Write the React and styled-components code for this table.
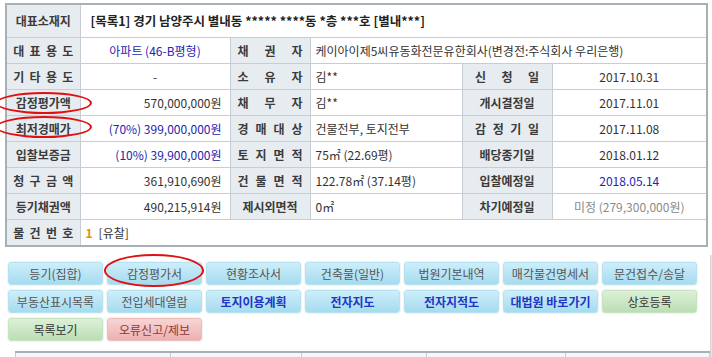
import React from "react";
import styled, { createGlobalStyle } from "styled-components";

const GlobalStyle = createGlobalStyle`
  html, body {
    margin: 0;
    padding: 0;
    overflow: hidden;
    background: #fff;
  }
  body {
    font-family: "Noto Sans CJK KR", "Noto Sans", sans-serif;
    font-size: 12px;
    color: #333;
  }
`;

const Page = styled.div`
  position: relative;
  width: 712px;
  height: 357px;
  padding: 3px 0 0 5px;
  box-sizing: border-box;
  overflow: hidden;
`;

const InfoTable = styled.table`
  width: 703px;
  table-layout: fixed;
  border-collapse: collapse;
  border: 2px solid #a7afb7;
`;

const Label = styled.th`
  height: 25px;
  padding: 0;
  background: #e7ecf1;
  border: 1px solid #c6cdd5;
  color: #3b3b3b;
  font-weight: bold;
  font-size: 12px;
  line-height: 14px;
  text-align: center;
  vertical-align: middle;
`;

const Spread = styled.span`
  display: flex;
  justify-content: space-between;
  width: ${(p) => p.$w}px;
  margin: 0 auto;
`;

const Value = styled.td`
  height: 25px;
  padding: 0 ${(p) => (p.$align === "right" ? "8px" : "5px")};
  border: 1px solid #c6cdd5;
  font-size: 12px;
  line-height: 14px;
  white-space: nowrap;
  overflow: hidden;
  text-align: ${(p) => p.$align || "left"};
  color: ${(p) =>
    p.$tone === "blue" ? "#2525b0" : p.$tone === "gray" ? "#8a8a8a" : "#333"};
`;

const Address = styled.span`
  font-weight: bold;
  font-size: 12.5px;
  color: #222;
  padding-left: 5px;
`;

const Num = styled.span`
  color: #e8900a;
  font-weight: bold;
  margin-right: 6px;
`;

const Lower = styled.div`
  display: flex;
  justify-content: space-between;
  margin-top: 8px;
  margin-left: -5px;
`;

const LowerMain = styled.div`
  padding: 7px 0 0 8px;
`;

const ButtonGrid = styled.div`
  display: grid;
  grid-template-columns: repeat(7, 95px);
  column-gap: 4px;
  row-gap: 5px;
`;

const tones = {
  blue: ["#cdeefa", "#a6dbef", "#b5e2f3", "#555", "normal"],
  link: ["#cdeefa", "#a6dbef", "#b5e2f3", "#2136c4", "bold"],
  green: ["#dcf0d8", "#bcdeb4", "#c6e4bf", "#333", "normal"],
  red: ["#f8d4d4", "#eeb0b0", "#efbcbc", "#8a3a3a", "normal"],
};

const Btn = styled.div`
  height: 23px;
  border-radius: 3px;
  border: 1px solid ${(p) => tones[p.$tone][2]};
  box-shadow: 0 0 0 1px #f2f4f5;
  background: linear-gradient(${(p) => tones[p.$tone][0]}, ${(p) => tones[p.$tone][1]});
  color: ${(p) => tones[p.$tone][3]};
  font-weight: ${(p) => tones[p.$tone][4]};
  font-size: 12px;
  display: flex;
  align-items: center;
  justify-content: center;
  box-sizing: border-box;
  white-space: nowrap;
`;

const SideStrip = styled.div`
  width: 4px;
  background: #e4e5e7;
  border-left: 1px solid #d2d4d7;
`;

const ListTable = styled.table`
  margin: 10px 0 0 7px;
  width: 695px;
  table-layout: fixed;
  border-collapse: collapse;
  border-top: 2px solid #a7afb7;
  border-left: 1px solid #c6cdd5;
  border-right: 1px solid #c6cdd5;
`;

const ListCell = styled.td`
  height: 24px;
  border-right: 1px solid #c6cdd5;
  background: #f4f6f8;
`;

const Ellipse = styled.div`
  position: absolute;
  left: ${(p) => p.$x}px;
  top: ${(p) => p.$y}px;
  width: ${(p) => p.$w}px;
  height: ${(p) => p.$h}px;
  border: 2px solid #e01010;
  border-radius: 50%;
  box-sizing: border-box;
  pointer-events: none;
`;

function L({ text, w = 60, ...rest }) {
  const chars = text.split("");
  return (
    <Label {...rest}>
      {chars.length < 5 ? (
        <Spread $w={w}>
          {chars.map((c, i) => (
            <span key={i}>{c}</span>
          ))}
        </Spread>
      ) : (
        text
      )}
    </Label>
  );
}

const buttons = [
  ["등기(집합)", "blue"],
  ["감정평가서", "blue"],
  ["현황조사서", "blue"],
  ["건축물(일반)", "blue"],
  ["법원기본내역", "blue"],
  ["매각물건명세서", "blue"],
  ["문건접수/송달", "blue"],
  ["부동산표시목록", "blue"],
  ["전입세대열람", "blue"],
  ["토지이용계획", "link"],
  ["전자지도", "link"],
  ["전자지적도", "link"],
  ["대법원 바로가기", "link"],
  ["상호등록", "green"],
  ["목록보기", "green"],
  ["오류신고/제보", "red"],
];

export default function App() {
  return (
    <Page>
      <GlobalStyle />
      <InfoTable>
        <colgroup>
          <col style={{ width: 74 }} />
          <col style={{ width: 150 }} />
          <col style={{ width: 80 }} />
          <col style={{ width: 152 }} />
          <col style={{ width: 90 }} />
          <col />
        </colgroup>
        <tbody>
          <tr>
            <L text="대표소재지" style={{ height: 32 }} />
            <Value colSpan={5}>
              <Address>[목록1] 경기 남양주시 별내동 ***** ****동 *층 ***호 [별내***]</Address>
            </Value>
          </tr>
          <tr>
            <L text="대표용도" />
            <Value $align="center" $tone="blue">아파트 (46-B평형)</Value>
            <L text="채권자" w={65} />
            <Value colSpan={3}>케이아이제5씨유동화전문유한회사(변경전:주식회사 우리은행)</Value>
          </tr>
          <tr>
            <L text="기타용도" />
            <Value $align="center">-</Value>
            <L text="소유자" w={65} />
            <Value>김**</Value>
            <L text="신청일" w={64} />
            <Value $align="center">2017.10.31</Value>
          </tr>
          <tr>
            <L text="감정평가액" />
            <Value $align="right">570,000,000원</Value>
            <L text="채무자" w={65} />
            <Value>김**</Value>
            <L text="개시결정일" />
            <Value $align="center">2017.11.01</Value>
          </tr>
          <tr>
            <L text="최저경매가" />
            <Value $align="right" $tone="blue">(70%) 399,000,000원</Value>
            <L text="경매대상" w={65} />
            <Value>건물전부, 토지전부</Value>
            <L text="감정기일" w={64} />
            <Value $align="center">2017.11.08</Value>
          </tr>
          <tr>
            <L text="입찰보증금" />
            <Value $align="right" $tone="blue">(10%) 39,900,000원</Value>
            <L text="토지면적" w={65} />
            <Value>75㎡ (22.69평)</Value>
            <L text="배당종기일" />
            <Value $align="center">2018.01.12</Value>
          </tr>
          <tr>
            <L text="청구금액" />
            <Value $align="right">361,910,690원</Value>
            <L text="건물면적" w={65} />
            <Value>122.78㎡ (37.14평)</Value>
            <L text="입찰예정일" />
            <Value $align="center" $tone="blue">2018.05.14</Value>
          </tr>
          <tr>
            <L text="등기채권액" />
            <Value $align="right">490,215,914원</Value>
            <L text="제시외면적" />
            <Value>0㎡</Value>
            <L text="차기예정일" />
            <Value $align="center" $tone="gray">미정 (279,300,000원)</Value>
          </tr>
          <tr>
            <L text="물건번호" />
            <Value colSpan={5}>
              <Num>1</Num>[유찰]
            </Value>
          </tr>
        </tbody>
      </InfoTable>

      <Lower>
        <LowerMain>
          <ButtonGrid>
            {buttons.map(([label, tone]) => (
              <Btn key={label} $tone={tone}>
                {label}
              </Btn>
            ))}
          </ButtonGrid>
          <ListTable>
            <colgroup>
              <col style={{ width: 155 }} />
              <col style={{ width: 131 }} />
              <col style={{ width: 125 }} />
              <col style={{ width: 139 }} />
              <col />
            </colgroup>
            <tbody>
              <tr>
                <ListCell />
                <ListCell />
                <ListCell />
                <ListCell />
                <ListCell />
              </tr>
            </tbody>
          </ListTable>
        </LowerMain>
        <SideStrip />
      </Lower>

      <Ellipse $x={-4} $y={92} $w={96} $h={22} />
      <Ellipse $x={-4} $y={116} $w={96} $h={22} />
      <Ellipse $x={104} $y={254} $w={100} $h={33} />
    </Page>
  );
}
